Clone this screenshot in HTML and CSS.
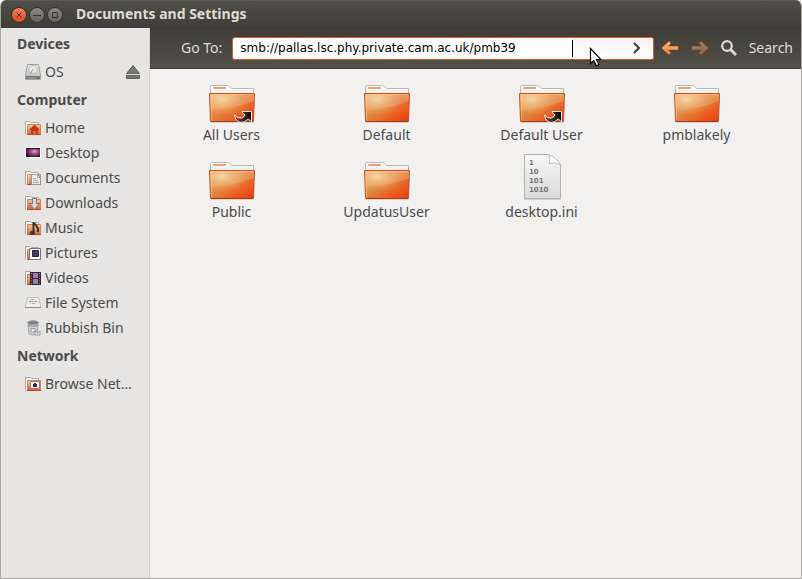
FILE: index.html
```html
<!DOCTYPE html>
<html lang="en">
<head>
<meta charset="utf-8">
<title>Documents and Settings</title>
<link rel="stylesheet" href="styles.css">
</head>
<body>
<svg class="defs" aria-hidden="true">
  <defs>
    <linearGradient id="folder-front" x1="0" y1="0" x2="1" y2="1">
      <stop offset="0" stop-color="#f0b478"/><stop offset=".45" stop-color="#e0873f"/><stop offset=".8" stop-color="#ee5219"/><stop offset="1" stop-color="#cc4616"/>
    </linearGradient>
    <radialGradient id="folder-glow" cx=".27" cy=".2" r=".6">
      <stop offset="0" stop-color="#f6d8a0" stop-opacity=".9"/><stop offset="1" stop-color="#f0a060" stop-opacity="0"/>
    </radialGradient>
    <linearGradient id="folder-shine" x1="0" y1="0" x2="1" y2="0">
      <stop offset="0" stop-color="#fff" stop-opacity=".06"/><stop offset="1" stop-color="#fff" stop-opacity=".18"/>
    </linearGradient>
    <linearGradient id="folder-back" x1="0" y1="0" x2="0" y2="1">
      <stop offset="0" stop-color="#fff"/><stop offset="1" stop-color="#e4e4e2"/>
    </linearGradient>
    <linearGradient id="small-front" x1="0" y1="0" x2="0" y2="1">
      <stop offset="0" stop-color="#f4c8a0"/><stop offset="1" stop-color="#e4602c"/>
    </linearGradient>
    <linearGradient id="metal" x1="0" y1="0" x2="0" y2="1">
      <stop offset="0" stop-color="#f0f0f0"/><stop offset="1" stop-color="#b4b4b4"/>
    </linearGradient>
    <linearGradient id="paper" x1="0" y1="0" x2="0" y2="1">
      <stop offset="0" stop-color="#f7f7f7"/><stop offset="1" stop-color="#dadada"/>
    </linearGradient>
    <linearGradient id="arrow" x1="0" y1="0" x2="0" y2="1">
      <stop offset="0" stop-color="#ffc890"/><stop offset="1" stop-color="#f07028"/>
    </linearGradient>
    <linearGradient id="link-fill" x1="0" y1="0" x2="1" y2="0">
      <stop offset="0" stop-color="#8a4a34"/><stop offset=".5" stop-color="#3c302c"/><stop offset="1" stop-color="#000"/>
    </linearGradient>
    <radialGradient id="wallpaper" cx=".6" cy=".4" r=".6">
      <stop offset="0" stop-color="#e0a0b8"/><stop offset=".5" stop-color="#8a4470"/><stop offset="1" stop-color="#2c1028"/>
    </radialGradient>
  </defs>
  <symbol id="folder" viewBox="0 0 48 48">
    <rect x="2" y="45" width="44" height="2" rx="1" fill="#000" opacity=".12"/>
    <path d="M2.500 20V10.500q0-1 1-1H19.500q1 0 1.700.8l1.300 1.400q.7.800 1.700.8H45.500V20z" fill="url(#folder-back)" stroke="#b9b9b6"/>
    <rect x="5" y="11" width="13" height="2" rx="1" fill="#eda070"/>
    <path d="M1.500 17.500H46.500L45.500 45q0 .5-1 .5H3.500q-1 0-1-.5z" fill="url(#folder-front)" stroke="#c4501f"/>
    <path d="M2 18H46L45 45H3z" fill="url(#folder-glow)"/>
    <path d="M2 18H46V25Q26 33 2.500 34z" fill="url(#folder-shine)"/>
    <path d="M3.500 44.500V18.500H45" fill="none" stroke="#fbd0a0" stroke-opacity=".5"/>
    <path d="M3 45.500H45" stroke="#a53a14"/>
  </symbol>
  <symbol id="link-folder" viewBox="0 0 48 48">
    <use href="#folder"/>
    <path d="M34 35.500H43.500V46L40.300 42.800Q37 46.500 33 46.500Q27.500 46 26.500 39Q30 43 33.500 42Q36.500 41 37 39L34 36z" fill="url(#link-fill)" stroke="#fff" stroke-opacity=".85"/>
  </symbol>
  <symbol id="mini" viewBox="0 0 16 16">
    <path d="M.5 14.500V1.500H5.500L6.500 2.500H13.500V6" fill="#fff" stroke="#a8a8a6"/>
    <path d="M2.500 14.500V4.500H15.500V14.500z" fill="url(#small-front)" stroke="#d88050"/>
    <path d="M2 14.500H16" stroke="#c8461c"/>
  </symbol>
  <symbol id="home" viewBox="0 0 16 16"><use href="#mini"/><path d="M4 10L9.500 4.500L15 10H13V14H10.500V11H8.500V14H6V10z" fill="#c23a16"/></symbol>
  <symbol id="desktop" viewBox="0 0 16 16"><path d="M.5 2.500H15.500V12.500H.5z" fill="url(#wallpaper)" stroke="#fff"/><path d="M1 3.500H15" stroke="#2c1424"/></symbol>
  <symbol id="documents" viewBox="0 0 16 16"><use href="#mini"/><path d="M3.500 4V14" stroke="#fff" opacity=".5"/><path d="M6.500 4.500H12.500L15.500 7.500V14.500H6.500z" fill="#f0f0ef" stroke="#999"/><path d="M12.500 4.500V7.500H15.500M8 8.500H11M8 10.500H13M8 12.500H14" fill="none" stroke="#aaa"/></symbol>
  <symbol id="downloads" viewBox="0 0 16 16"><use href="#mini"/><path d="M7.500 3.500H11.500V8.500H14.500L9.500 14.500L4.500 8.500H7.500z" fill="#d8d8d6" stroke="#777"/></symbol>
  <symbol id="music" viewBox="0 0 16 16"><use href="#mini"/><path d="M8.500 13V3Q10 3 11.500 6L13 8.500V12" fill="none" stroke="#373432" stroke-width="2"/><ellipse cx="7.500" cy="13" rx="2.500" ry="2" fill="#373432"/></symbol>
  <symbol id="pictures" viewBox="0 0 16 16"><use href="#mini"/><path d="M4.500 3.500H15.500V14.500H4.500z" fill="#fff" stroke="#777"/><path d="M7.500 5.500H13.500V11.500H7.500z" fill="#4b3b64" stroke="#2d2836"/></symbol>
  <symbol id="videos" viewBox="0 0 16 16"><use href="#mini"/><path d="M5 2H16V15H5z" fill="#2d292d"/><path d="M8 3H13V8H8zM8 9H13V14H8z" fill="#a678ae"/><path d="M6.500 3V15M14.500 3V15" stroke="#999" stroke-dasharray="1 1.500"/></symbol>
  <symbol id="filesystem" viewBox="0 0 16 16"><path d="M2.500 2.500H13.500L15.500 10.500V12.500H.5V10.500z" fill="#ececeb" stroke="#bdbdbb"/><path d="M0 12.500H16" stroke="#92928f"/><path d="M4 6.500H12M6 8.500L4 6.500L6.500 4.500H9M10 8.500H7M11 5.500L12 6.500L11 7.500" fill="none" stroke="#aeaeac"/></symbol>
  <symbol id="bin" viewBox="0 0 16 16"><path d="M3 4.500L4 14Q7.500 16 12 14L13 4.500z" fill="#d0d1d0" stroke="#aaa"/><ellipse cx="8" cy="2.700" rx="5.500" ry="2" fill="#7b8489" stroke="#a0a2a2"/><path d="M3 5.500Q8 7 13 5.500" fill="none" stroke="#888"/><path d="M6 8.500H10V12H6zM10 11.500L12 10V13.500L15 11V15H10z" fill="#eee" stroke="#969896"/></symbol>
  <symbol id="network" viewBox="0 0 16 16"><use href="#mini"/><path d="M5.500 5.500H14.500V12.500H5.500z" fill="#eeeeec" stroke="#888"/><path d="M9 7H11V8H12V11H8V8H9z" fill="#30302e"/></symbol>
  <symbol id="disk" viewBox="0 0 16 16"><path d="M2.500.5H13.500L15.500 11V15.500H.5V11z" fill="url(#metal)" stroke="#a0a09e"/><path d="M1 12H15V15H1z" fill="#777"/><path d="M2 14H11" stroke="#aaa"/><ellipse cx="8" cy="5.500" rx="4.500" ry="4" fill="#e5e5e5" stroke="#bbb"/><path d="M8 5.500L5 10" stroke="#999"/></symbol>
</svg>

<div class="window">
  <header class="titlebar">
    <button class="control close" aria-label="Close"><svg viewBox="0 0 16 16"><path d="M5.500 5.500L10.500 10.500M10.500 5.500L5.500 10.500"/></svg></button>
    <button class="control" aria-label="Minimise"><svg viewBox="0 0 16 16"><path d="M4 8.500H12"/></svg></button>
    <button class="control" aria-label="Maximise"><svg viewBox="0 0 16 16"><path d="M5.500 5.500H10.500V10.500H5.500z"/></svg></button>
    <h1>Documents and Settings</h1>
  </header>
  <div class="body">
    <nav class="sidebar">
      <h2>Devices</h2>
      <ul>
        <li><a href="#"><svg><use href="#disk"/></svg><span>OS</span></a>
          <button class="eject" aria-label="Eject OS"><svg viewBox="0 0 14 14"><path d="M7 .5L13.500 8.500H.5zM.5 10.500H13.500V13.500H.5z" fill="#777773" stroke="#5c5c58"/></svg></button></li>
      </ul>
      <h2>Computer</h2>
      <ul>
        <li><a href="#"><svg><use href="#home"/></svg><span>Home</span></a></li>
        <li><a href="#"><svg><use href="#desktop"/></svg><span>Desktop</span></a></li>
        <li><a href="#"><svg><use href="#documents"/></svg><span>Documents</span></a></li>
        <li><a href="#"><svg><use href="#downloads"/></svg><span>Downloads</span></a></li>
        <li><a href="#"><svg><use href="#music"/></svg><span>Music</span></a></li>
        <li><a href="#"><svg><use href="#pictures"/></svg><span>Pictures</span></a></li>
        <li><a href="#"><svg><use href="#videos"/></svg><span>Videos</span></a></li>
        <li><a href="#"><svg><use href="#filesystem"/></svg><span>File System</span></a></li>
        <li><a href="#"><svg><use href="#bin"/></svg><span>Rubbish Bin</span></a></li>
      </ul>
      <h2>Network</h2>
      <ul>
        <li><a href="#"><svg><use href="#network"/></svg><span>Browse Net…</span></a></li>
      </ul>
    </nav>
    <div class="content">
      <div class="toolbar">
        <label for="location">Go To:</label>
        <div class="location">
          <input id="location" type="text" value="smb://pallas.lsc.phy.private.cam.ac.uk/pmb39" spellcheck="false">
          <span class="caret"></span>
          <button class="go" aria-label="Go"><svg viewBox="0 0 10 12"><path d="M2 1L7 6L2 11" fill="none" stroke="#3c3b37" stroke-width="2"/></svg></button>
          <svg class="pointer" viewBox="0 0 13 20"><path d="M1.500 1.500V16.500L4.700 13.500L7.200 18.700L9.900 17.500L7.500 12.500H12z" fill="#fff" stroke="#000" stroke-width="1.200"/></svg>
        </div>
        <button class="nav" aria-label="Back"><svg viewBox="0 0 18 16"><path d="M8 1.500L1 8L8 14.500L9.500 12.500L6.500 9.500H17V6.500H6.500L9.500 3.500z" fill="url(#arrow)" stroke="#f08a48" stroke-width=".8" stroke-linejoin="round"/></svg></button>
        <button class="nav" aria-label="Forward" disabled><svg viewBox="0 0 18 16"><path d="M10 1.500L17 8L10 14.500L8.500 12.500L11.500 9.500H1V6.500H11.500L8.500 3.500z" fill="url(#arrow)" stroke="#f08a48" stroke-width=".8" stroke-linejoin="round"/></svg></button>
        <button class="search"><svg viewBox="0 0 16 16"><circle cx="6" cy="6" r="4.800" fill="none" stroke="#dfdbd2" stroke-width="2.200"/><path d="M9.500 9.500L15 15" stroke="#dfdbd2" stroke-width="2.800"/></svg><span>Search</span></button>
      </div>
      <main class="files">
        <a href="#"><svg><use href="#link-folder"/></svg><span>All Users</span></a>
        <a href="#"><svg><use href="#folder"/></svg><span>Default</span></a>
        <a href="#"><svg><use href="#link-folder"/></svg><span>Default User</span></a>
        <a href="#"><svg><use href="#folder"/></svg><span>pmblakely</span></a>
        <a href="#"><svg><use href="#folder"/></svg><span>Public</span></a>
        <a href="#"><svg><use href="#folder"/></svg><span>UpdatusUser</span></a>
        <a href="#"><svg viewBox="0 0 48 48">
          <path d="M6 45.500H43V47H6z" opacity=".12"/>
          <path d="M6.500 1.500H30.500L42.500 11.500V45.500H6.500z" fill="url(#paper)" stroke="#b2b2b0"/>
          <path d="M30.500 1.500Q33 7 31 10.500Q37 9 42.500 11.500Q39 5 30.500 1.500z" fill="#fff" stroke="#b8b8b6"/>
          <g class="digits"><text x="11" y="12">1</text><text x="11" y="21">10</text><text x="11" y="30">101</text><text x="11" y="39">1010</text></g>
        </svg><span>desktop.ini</span></a>
      </main>
    </div>
  </div>
</div>
</body>
</html>
```
FILE: styles.css
```css
* { box-sizing: border-box; }
body {
  margin: 0;
  background: #fff;
  color: #4c4c4c;
  font: 14px/20px "Noto Sans", "Open Sans", sans-serif;
}
h1, h2, ul { margin: 0; padding: 0; }
ul { list-style: none; }
a { color: inherit; text-decoration: none; }
button { padding: 0; border: 0; background: none; color: inherit; font: inherit; }
svg { display: block; flex: none; }
.defs { position: absolute; width: 0; height: 0; }
.digits { fill: #777; font: bold 7px "DejaVu Sans", sans-serif; }

.window {
  display: flex;
  flex-direction: column;
  min-height: 100vh;
  border: solid #a9a69f;
  border-width: 0 1px 1px;
  border-radius: 6px 6px 0 0;
  overflow: hidden;
  background: #f2f1f0;
}
.titlebar {
  display: flex;
  align-items: center;
  gap: 2px;
  height: 28px;
  padding-left: 10px;
  border-top: 1px solid #5c5b55;
  background: linear-gradient(#504f49, #3e3d39);
  color: #dfdbd2;
}
.titlebar h1 { padding-left: 11px; font-size: 14px; line-height: 18px; padding-bottom: 2px; }
.control {
  width: 16px;
  height: 16px;
  border: 1px solid #33322e;
  border-radius: 50%;
  background: linear-gradient(#8b8a83, #65645d);
}
.control svg { width: 16px; height: 16px; margin: -1px; fill: none; stroke: #35342f; }
.close { background: linear-gradient(#f58154, #df4a16); }

.body { display: flex; flex: 1; }
.sidebar {
  width: 149px;
  flex: none;
  border-right: 1px solid #d5d3d0;
  background: #e6e5e3;
}
.sidebar h2 { padding-left: 16px; font-size: 14px; line-height: 31px; }
.sidebar li { display: flex; align-items: center; height: 25px; padding: 0 9px 0 24px; }
.sidebar a { display: flex; flex: 1; align-items: center; gap: 4px; white-space: nowrap; }
.sidebar a svg { width: 16px; height: 16px; }
.eject svg { width: 14px; height: 14px; }

.content { flex: 1; min-width: 0; }
.toolbar {
  display: flex;
  align-items: center;
  height: 41px;
  padding: 0 8px 0 31px;
  border-bottom: 1px solid #3a3935;
  background: linear-gradient(#3d3c38, #545149);
  color: #dfdbd2;
}
.location {
  position: relative;
  display: flex;
  flex: 1;
  align-items: center;
  height: 23px;
  margin: 0 7px 0 10px;
  border: 1px solid #dd5c2c;
  border-radius: 3px;
  background: #fff;
}
.location input {
  flex: 1;
  min-width: 0;
  height: 21px;
  padding: 0 7px;
  border: 0;
  outline: 0;
  background: none;
  color: #000;
  font: 12px "DejaVu Sans", sans-serif;
}
.caret { width: 1px; height: 17px; background: #000; }
.go {
  display: flex;
  align-items: center;
  justify-content: flex-end;
  width: 80px;
  height: 21px;
  padding-right: 11px;
  border-radius: 0 2px 2px 0;
  background: linear-gradient(#f4f4f4, #fff);
}
.go svg { width: 10px; height: 12px; }
.pointer { position: absolute; top: 9px; right: 51px; width: 13px; height: 20px; }
.nav { margin-right: 12px; }
.nav svg { width: 18px; height: 16px; }
.nav:disabled { opacity: .5; }
.search { display: flex; align-items: center; gap: 12px; }
.search svg { width: 16px; height: 16px; }

.files {
  display: grid;
  grid-template-columns: repeat(auto-fill, 155px);
  row-gap: 8px;
  padding: 7px 4px;
}
.files a { display: flex; flex-direction: column; align-items: center; gap: 1px; }
.files svg { width: 48px; height: 48px; }
```
